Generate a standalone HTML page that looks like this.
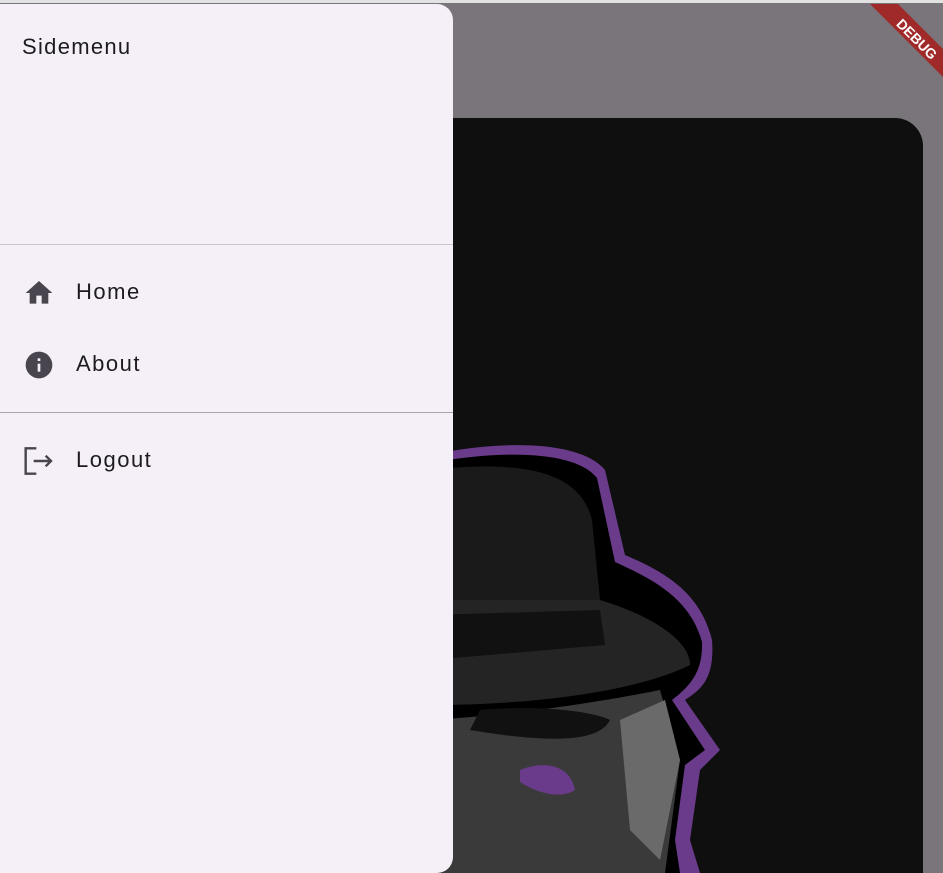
<!DOCTYPE html>
<html><head><meta charset="utf-8"><style>
html,body{margin:0;padding:0;width:943px;height:873px;overflow:hidden;background:#79757a;font-family:"Liberation Sans",sans-serif}
.top{position:absolute;left:0;top:0;width:943px;height:3px;background:#e2e2e2}
.card{position:absolute;left:420px;top:118px;width:503px;height:755px;background:#0f0f0f;border-radius:28px 28px 0 0;overflow:hidden}
.drawer{position:absolute;left:0;top:4px;width:453px;height:869px;background:#f5f0f8;border-radius:0 16px 16px 0}
.title{position:absolute;left:22px;top:30px;font-size:22px;color:#1d1b20;letter-spacing:1.3px}
.div{position:absolute;left:0;width:453px;height:1px;background:#cac4d0}
.item{position:absolute;left:76px;font-size:22px;color:#1d1b20;letter-spacing:1.5px}
.ic{position:absolute;left:23px;width:32px;height:32px}
</style></head><body>
<div class="top"></div>
<div class="card">
<svg width="503" height="755" viewBox="420 118 503 755" style="position:absolute;left:0;top:0">
<path d="M430 455 C500 440 580 440 605 470 L625 555 C660 570 700 590 712 640 C715 680 700 690 685 700 L720 750 L700 770 L690 840 L700 873 L430 873 Z" fill="#6a3b8a"/>
<path d="M430 463 C500 450 575 450 597 478 L615 562 C650 578 690 597 702 642 C703 672 690 686 672 700 L705 750 L685 765 L675 840 L680 873 L430 873 Z" fill="#000"/>
<path d="M430 470 C520 460 580 470 592 520 L600 600 L430 600 Z" fill="#1a1a1a"/>
<path d="M430 600 L600 600 C650 615 690 640 690 665 C640 690 540 705 430 705 Z" fill="#242424"/>
<path d="M430 615 L600 610 L605 645 L430 660 Z" fill="#111"/>
<path d="M430 720 C520 715 610 700 660 690 L680 760 L665 873 L430 873 Z" fill="#3a3a3a"/>
<path d="M620 720 L665 700 L680 760 L660 860 L630 830 Z" fill="#6a6a6a"/>
<path d="M520 770 C545 760 570 765 575 790 C560 800 535 792 520 782 Z" fill="#6a3b8a"/>
<path d="M480 710 C530 705 590 710 610 720 C600 740 560 745 470 730 Z" fill="#111"/>
</svg>
</div>
<svg style="position:absolute;left:843px;top:0" width="100" height="100" viewBox="0 0 100 100">
<polygon points="27,4 55,4 100,49 100,77" fill="#a02a2a"/>
<text x="0" y="0" transform="translate(73,40) rotate(45)" text-anchor="middle" dominant-baseline="middle" font-family="Liberation Sans" font-weight="bold" font-size="14" fill="#fff">DEBUG</text>
</svg>
<div class="drawer">
<div class="title">Sidemenu</div>
<div class="div" style="top:240px"></div>
<svg class="ic" style="top:273px" viewBox="0 0 24 24"><path d="M10 20v-6h4v6h5v-8h3L12 3 2 12h3v8z" fill="#49454f"/></svg>
<div class="item" style="top:275px">Home</div>
<svg class="ic" style="top:345px" viewBox="0 0 24 24"><circle cx="12" cy="12" r="10" fill="#49454f"/><rect x="11" y="11" width="2" height="6" fill="#f5f0f8"/><rect x="11" y="7" width="2" height="2" fill="#f5f0f8"/></svg>
<div class="item" style="top:347px">About</div>
<div class="div" style="top:408px;background:#a9a4ac"></div>
<svg class="ic" style="top:441px" viewBox="0 0 24 24"><path d="M10 2.5H2v19h8" fill="none" stroke="#49454f" stroke-width="1.8"/><path d="M8 12h13M17 8l4 4-4 4" fill="none" stroke="#49454f" stroke-width="1.8"/></svg>
<div class="item" style="top:443px">Logout</div>
</div>
</body></html>
